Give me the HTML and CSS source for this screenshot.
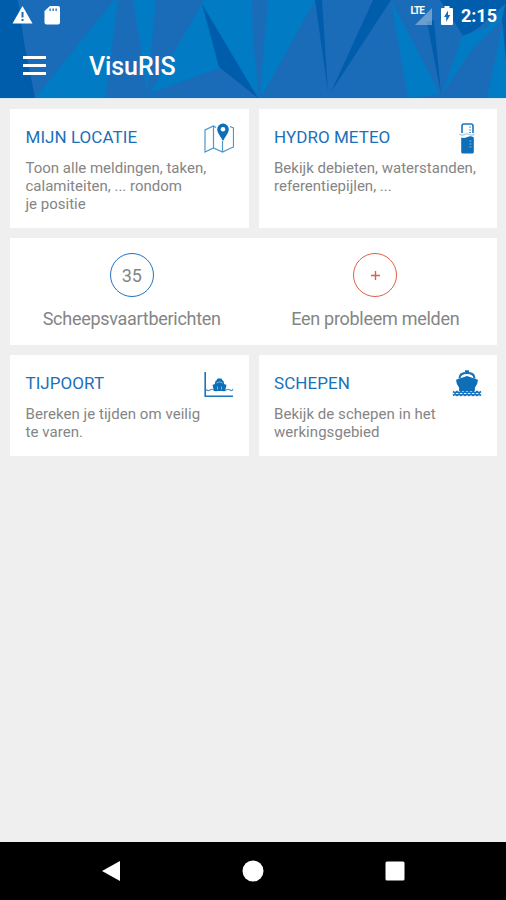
FILE: index.html
```html
<!DOCTYPE html>
<html lang="nl">

<head>
    <meta charset="utf-8" />
    <title>VisuRIS</title>
    <link rel="stylesheet" href="styles.css">
</head>

<body>
    <div class="screen">
        <header class="header">
            <svg class="header-bg" viewBox="0 0 506 98" preserveAspectRatio="none">
                <rect class="mid" width="506" height="98" />
                <polygon class="dark" points="0,0 18,0 24,42 35,98 0,98" />
                <polygon class="light" points="35,98 114,0 118,0 105,98" />
                <polygon class="light" points="133,0 156,0 147,94 143,60" />
                <polygon class="light" points="147,98 202,4 203,0 252,0 253,40 259,98 253,88 219,68 153,92" />
                <polygon class="dark" points="202,4 258,98 219,67 209,30" />
                <polygon class="light" points="268,0 315,0 263,94 260,94" />
                <polygon class="dark" points="315,0 322,0 328,92" />
                <polygon class="dark" points="373,0 391,0 331,92" />
                <polygon class="light" points="391,0 440,94 408,98" />
                <polygon class="dark" points="427,22 434,20 441,94" />
                <polygon class="dark" points="440,0 506,0 506,3 478,28 464,37" />
                <polygon class="light" points="442,94 462,36 487,27 504,5 500,22 473,48" />
                <polygon class="light" points="503,22 506,70 506,98 487,98" />
                <polygon class="dark" points="502,20 506,0 506,60" />
            </svg>
            <div class="statusbar">
                <svg class="status-left" width="62" height="26" viewBox="0 0 62 26">
                    <path class="white" d="M22.500 6L32.500 23.500H12.500Z" />
                    <path class="hole" d="M21.500 12h2v5.500h-2zM21.500 19h2v2h-2z" />
                    <path class="white" d="M50 6h8q2 0 2 2v14.500q0 2-2 2H46.500q-2 0-2-2V11Z" />
                    <path class="hole" d="M49.500 8.500h1.300v2.500h-1.300zM52.500 8.500h1.300v2.500h-1.300zM55.500 8.500h1.300v2.500h-1.300z" />
                </svg>
                <div class="status-right">
                    <span class="lte">LTE</span>
                    <svg class="signal" width="17" height="17" viewBox="0 0 17 17">
                        <path d="M17 0v17H0Z" />
                    </svg>
                    <svg class="battery" width="12" height="19" viewBox="0 0 12 19">
                        <path class="white" d="M3.500 0h5v2H11q1 0 1 1v15q0 1-1 1H1q-1 0-1-1V3q0-1 1-1h2.500z" />
                        <path class="hole" d="M7 4.500v4.500h2.200L5.200 16v-5H3z" />
                    </svg>
                    <span class="clock">2:15</span>
                </div>
            </div>
            <div class="toolbar">
                <div class="menu"><i></i><i></i><i></i></div>
                <h1 class="app-title">VisuRIS</h1>
            </div>
        </header>

        <main class="content">
            <section class="card">
                <h2 class="card-title">MIJN LOCATIE</h2>
                <p class="card-text">Toon alle meldingen, taken,<br>calamiteiten, ... rondom<br>je positie</p>
                <svg class="card-icon" width="32" height="32" viewBox="0 0 32 32">
                    <path class="thin" d="M14 5.500L11.500 4 3 8v22l8.500-4 9 4 8.500-4 2.500-1V6L28 4.500M11.500 4.500v21.500M20.500 19v11" />
                    <path class="fill" d="M21 1.500a5.800 5.800 0 0 1 5.800 5.800C26.800 11 23.500 14 21.500 18.500h-1C18.500 14 15.200 11 15.200 7.300A5.800 5.800 0 0 1 21 1.500z" />
                    <circle class="paper" cx="21" cy="7.200" r="2.300" />
                </svg>
            </section>

            <section class="card">
                <h2 class="card-title">HYDRO METEO</h2>
                <p class="card-text">Bekijk debieten, waterstanden,<br>referentiepijlen, ...</p>
                <svg class="card-icon" width="32" height="32" viewBox="0 0 32 32">
                    <path class="line" d="M11 11V4q0-2 2-2h7q2 0 2 2v7" />
                    <path class="thin" d="M18 5h2M18 8h2M18 10.500h2" />
                    <path class="pale" d="M8.500 12q2.500 2 5 .5t5 0 5-.5" />
                    <path class="fill" d="M10.200 15.500q3 1 6.300-.5t6.300 .5V30q0 1.500-1.500 1.500h-9.600q-1.500 0-1.500-1.500z" />
                    <path class="gauge" d="M18.500 19h2M18.500 22h2M18.500 25h2" />
                </svg>
            </section>

            <section class="card card-wide">
                <div class="action">
                    <span class="badge">35</span>
                    <span class="action-label">Scheepsvaartberichten</span>
                </div>
                <div class="action">
                    <span class="badge badge-red">
                        <svg width="9" height="9" viewBox="0 0 9 9"><path d="M4.500 0v9M0 4.500h9" /></svg>
                    </span>
                    <span class="action-label">Een probleem melden</span>
                </div>
            </section>

            <section class="card card-low">
                <h2 class="card-title">TIJPOORT</h2>
                <p class="card-text">Bereken je tijden om veilig<br>te varen.</p>
                <svg class="card-icon" width="32" height="32" viewBox="0 0 32 32">
                    <path class="line" d="M3.200 4v24.300H31" />
                    <path class="thin" d="M4 21.500q2 2 4 .5t4 0 4 0 4 0 4 0 4 0 3-1" />
                    <path class="fill" d="M10.500 17l2.300-1q.2-3.500 2-4.100l.7-1.400h4l.7 1.400q1.800.6 2 4.100l2.300 1-1.500 6h-11z" />
                    <path class="gauge" d="M14.500 15q3-2.500 6 0M15.500 18.500v3M19.500 18.500v3" />
                </svg>
            </section>

            <section class="card card-low">
                <h2 class="card-title">SCHEPEN</h2>
                <p class="card-text">Bekijk de schepen in het<br>werkingsgebied</p>
                <svg class="card-icon" width="32" height="32" viewBox="0 0 32 32">
                    <path class="fill" d="M14 2.300h4v2h-4z" />
                    <path class="ring" d="M8.500 10.500Q8.500 4.800 16 4.800t7.500 5.700" />
                    <path class="fill" d="M5 11.800L16 8 27 11.800q-.3 4.700-3 7.700l-.2 3.500H8.200L8 19.500Q5.300 16.500 5 11.800z" />
                    <path class="wave" d="M2 23.500l2 1.500 2-1.500 2 1.500 2-1.500 2 1.500 2-1.500 2 1.500 2-1.500 2 1.500 2-1.500 2 1.500 2-1.500 2 1.500 2-1.500M2 27.500l2-1.500 2 1.500 2-1.500 2 1.500 2-1.500 2 1.500 2-1.500 2 1.500 2-1.500 2 1.500 2-1.500 2 1.500 2-1.500 2 1.500" />
                </svg>
            </section>
        </main>

        <footer class="navbar">
            <svg width="20" height="22" viewBox="0 0 20 22"><path d="M19 1v20L1 11z" /></svg>
            <svg width="22" height="22" viewBox="0 0 22 22"><circle cx="11" cy="11" r="10.500" /></svg>
            <svg width="20" height="20" viewBox="0 0 20 20"><rect x="0.500" y="0.500" width="19" height="19" rx="1.500" /></svg>
        </footer>
    </div>
</body>

</html>
```

FILE: styles.css
```css
body {
    margin: 0px;
    font-family: Roboto, 'Liberation Sans', sans-serif;
    background-color: #efefef;
}

h1,
h2,
p {
    margin: 0px;
    font-weight: 400;
}

.screen {
    width: 506px;
    height: 900px;
    display: flex;
    flex-direction: column;
    overflow: hidden;
}

/* header */

.header {
    position: relative;
    height: 98px;
    color: #fff;
    border-bottom: 1px solid #d9e9f2;
}

.header-bg {
    position: absolute;
    top: 0;
    left: 0;
    width: 100%;
    height: 100%;
}

.header-bg .mid {
    fill: #1b6cb8;
}

.header-bg .light {
    fill: #007bc4;
}

.header-bg .dark {
    fill: #005dab;
}

.statusbar {
    position: relative;
    display: flex;
    justify-content: space-between;
    height: 32px;
}

.white {
    fill: #fff;
}

.hole {
    fill: #1b6cb8;
}

.status-right {
    display: flex;
    align-items: flex-start;
    padding: 6px 9px 0 0;
}

.lte {
    font-size: 10px;
    line-height: 10px;
    font-weight: 700;
    letter-spacing: -0.9px;
    margin-right: -9px;
}

.signal {
    margin-top: 2px;
    fill: #fff;
    opacity: 0.35;
}

.battery {
    margin-left: 9px;
}

.clock {
    font-size: 18px;
    line-height: 20px;
    font-weight: 700;
    margin-left: 8px;
}

.toolbar {
    position: relative;
    display: flex;
    align-items: center;
    height: 66px;
    padding-left: 23px;
}

.menu {
    display: flex;
    flex-direction: column;
    gap: 5px;
}

.menu i {
    width: 23px;
    height: 3px;
    background-color: #fff;
}

.app-title {
    margin-left: 43px;
    padding-top: 2px;
    font-size: 25px;
    font-weight: 500;
    letter-spacing: -0.1px;
}

/* cards */

.content {
    flex: 1;
    display: grid;
    grid-template-columns: 1fr 1fr;
    grid-template-rows: 119px 107px 101px;
    gap: 10px;
    padding: 10px 9px 0 10px;
}

.card {
    position: relative;
    padding: 18px 0 0 15.5px;
    background-color: #fff;
    color: #858585;
}

.card-title {
    font-size: 17px;
    line-height: 20px;
    letter-spacing: 0.05px;
    color: #1b70ba;
}

.card-text {
    margin-top: 13px;
    font-size: 15px;
    line-height: 17.8px;
    white-space: nowrap;
}

.card-low .card-text {
    letter-spacing: 0.05px;
}

.card-icon {
    position: absolute;
    top: 13px;
    right: 14.5px;
}

.card-icon .line,
.card-icon .thin,
.card-icon .pale,
.card-icon .gauge,
.card-icon .ring,
.card-icon .wave {
    fill: none;
    stroke: #1b75bc;
    stroke-width: 1.6;
}

.card-icon .thin {
    stroke: #4c97ce;
    stroke-width: 1.2;
}

.card-icon .pale {
    stroke: #9bcbe9;
    stroke-width: 1.2;
}

.card-icon .gauge {
    stroke: #7fb8e0;
    stroke-width: 1;
}

.card-icon .ring {
    stroke-width: 2.2;
}

.card-icon .fill {
    fill: #0d6fb8;
}

.card-icon .paper {
    fill: #fff;
}

.card-wide {
    grid-column: 1 / 3;
    display: grid;
    grid-template-columns: 1fr 1fr;
    padding: 0;
}

.action {
    display: flex;
    flex-direction: column;
    align-items: center;
    padding-top: 15px;
}

.badge {
    display: flex;
    align-items: center;
    justify-content: center;
    box-sizing: border-box;
    width: 44px;
    height: 44px;
    border: 1.5px solid #2272c3;
    border-radius: 50%;
    font-size: 18px;
}

.badge-red {
    border-color: #df5e49;
}

.badge-red svg {
    stroke: #df5e49;
    stroke-width: 1.4;
}

.action-label {
    margin-top: 11px;
    font-size: 18px;
    line-height: 22px;
    letter-spacing: -0.28px;
}

/* android buttons */

.navbar {
    display: flex;
    align-items: center;
    justify-content: center;
    gap: 121px;
    height: 58px;
    background-color: #000;
    fill: #fff;
}
```
